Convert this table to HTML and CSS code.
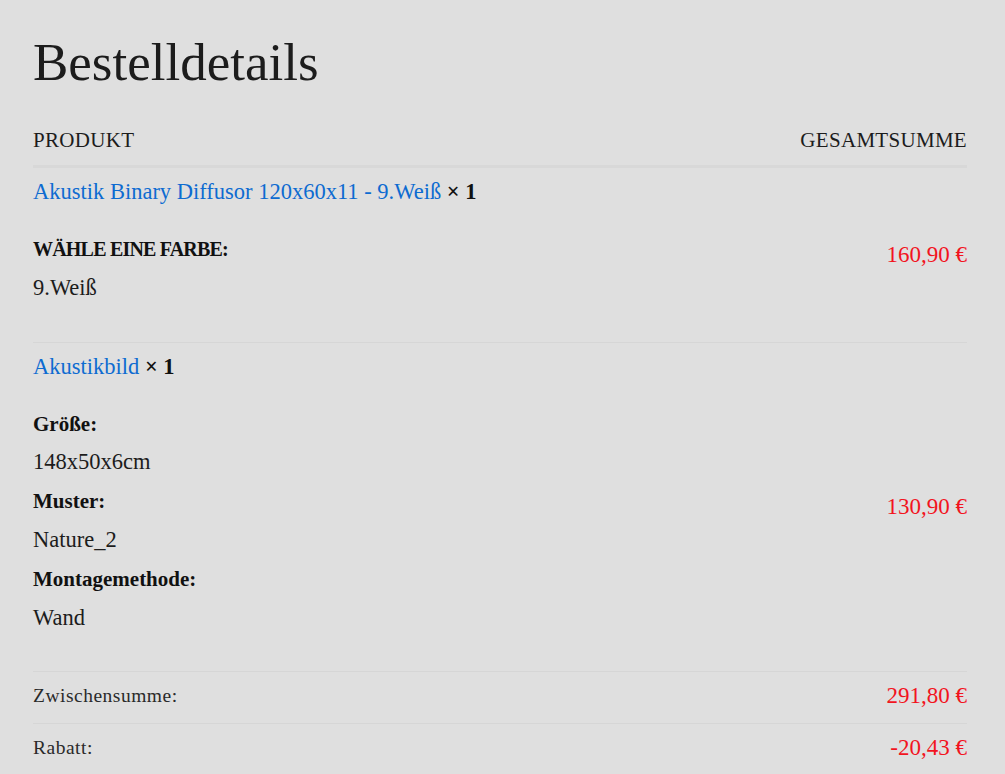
FILE: index.html
```html
<!DOCTYPE html>
<html lang="de">
<head>
<meta charset="utf-8">
<title>Bestelldetails</title>
<link rel="stylesheet" href="styles.css">
</head>
<body>
<section class="order">
  <h1 class="order-title">Bestelldetails</h1>
  <table class="order-table">
    <thead>
      <tr>
        <th class="col-product">Produkt</th>
        <th class="col-total">Gesamtsumme</th>
      </tr>
    </thead>
    <tbody>
      <tr class="item">
        <td class="col-product">
          <a class="item-link" href="#">Akustik Binary Diffusor 120x60x11 - 9.Weiß</a> <strong class="qty">×&nbsp;1</strong>
          <ul class="meta">
            <li class="meta-label upper">WÄHLE EINE FARBE:</li>
            <li class="meta-value">9.Weiß</li>
          </ul>
        </td>
        <td class="col-total price">160,90&nbsp;€</td>
      </tr>
      <tr class="item">
        <td class="col-product">
          <a class="item-link" href="#">Akustikbild</a> <strong class="qty">×&nbsp;1</strong>
          <ul class="meta">
            <li class="meta-label">Größe:</li>
            <li class="meta-value">148x50x6cm</li>
            <li class="meta-label">Muster:</li>
            <li class="meta-value">Nature_2</li>
            <li class="meta-label">Montagemethode:</li>
            <li class="meta-value">Wand</li>
          </ul>
        </td>
        <td class="col-total price">130,90&nbsp;€</td>
      </tr>
    </tbody>
    <tfoot>
      <tr class="sum">
        <th class="col-product">Zwischensumme:</th>
        <td class="col-total price">291,80&nbsp;€</td>
      </tr>
      <tr class="sum">
        <th class="col-product">Rabatt:</th>
        <td class="col-total price">-20,43&nbsp;€</td>
      </tr>
    </tfoot>
  </table>
</section>
</body>
</html>
```
FILE: styles.css
```css
html, body {
  margin: 0;
  padding: 0;
  background: #dfdfdf;
}
body {
  font-family: "Liberation Serif", "DejaVu Serif", serif;
  color: #1c1c1c;
}
.order {
  padding: 0 38px 0 33px;
}
.order-title {
  margin: 0;
  padding-top: 27px;
  font-size: 53px;
  line-height: 70px;
  font-weight: normal;
  color: #1c1c1c;
}
.order-table {
  width: 100%;
  border-collapse: collapse;
  margin-top: 29px;
}
.order-table th,
.order-table td {
  padding: 0;
  vertical-align: middle;
}
thead th {
  font-weight: normal;
  text-transform: uppercase;
  font-size: 21px;
  line-height: 28px;
  padding-bottom: 11px !important;
  border-bottom: 3px solid #d8d8d8;
  letter-spacing: 0.3px;
}
.col-product { text-align: left; }
.col-total { text-align: right; }
.item td {
  border-bottom: 1px solid #d6d6d6;
}
.item td.col-product {
  padding: 10px 0 34px;
  font-size: 22.5px;
  line-height: 28px;
}
.item-link {
  color: #0d6bd1;
  text-decoration: none;
}
.qty {
  font-weight: bold;
  color: #111;
}
.meta {
  list-style: none;
  margin: 24px 0 0;
  padding: 0;
}
.meta li {
  font-size: 22.5px;
  line-height: 38.8px;
}
.meta .meta-label {
  font-weight: bold;
  font-size: 21px;
  color: #111;
}
.meta .meta-label.upper {
  font-size: 20px;
  letter-spacing: -0.8px;
}
.meta-value {
  color: #1c1c1c;
}
.price {
  color: #f2141e;
  font-size: 23px;
  line-height: 28px;
}
.sum th,
.sum td {
  border-bottom: 1px solid #d6d6d6;
  padding: 10px 0 13px !important;
  line-height: 28px;
}
.sum th {
  font-weight: normal;
  font-size: 19.5px;
  color: #2a2a2a;
  letter-spacing: 0.5px;
}
```
